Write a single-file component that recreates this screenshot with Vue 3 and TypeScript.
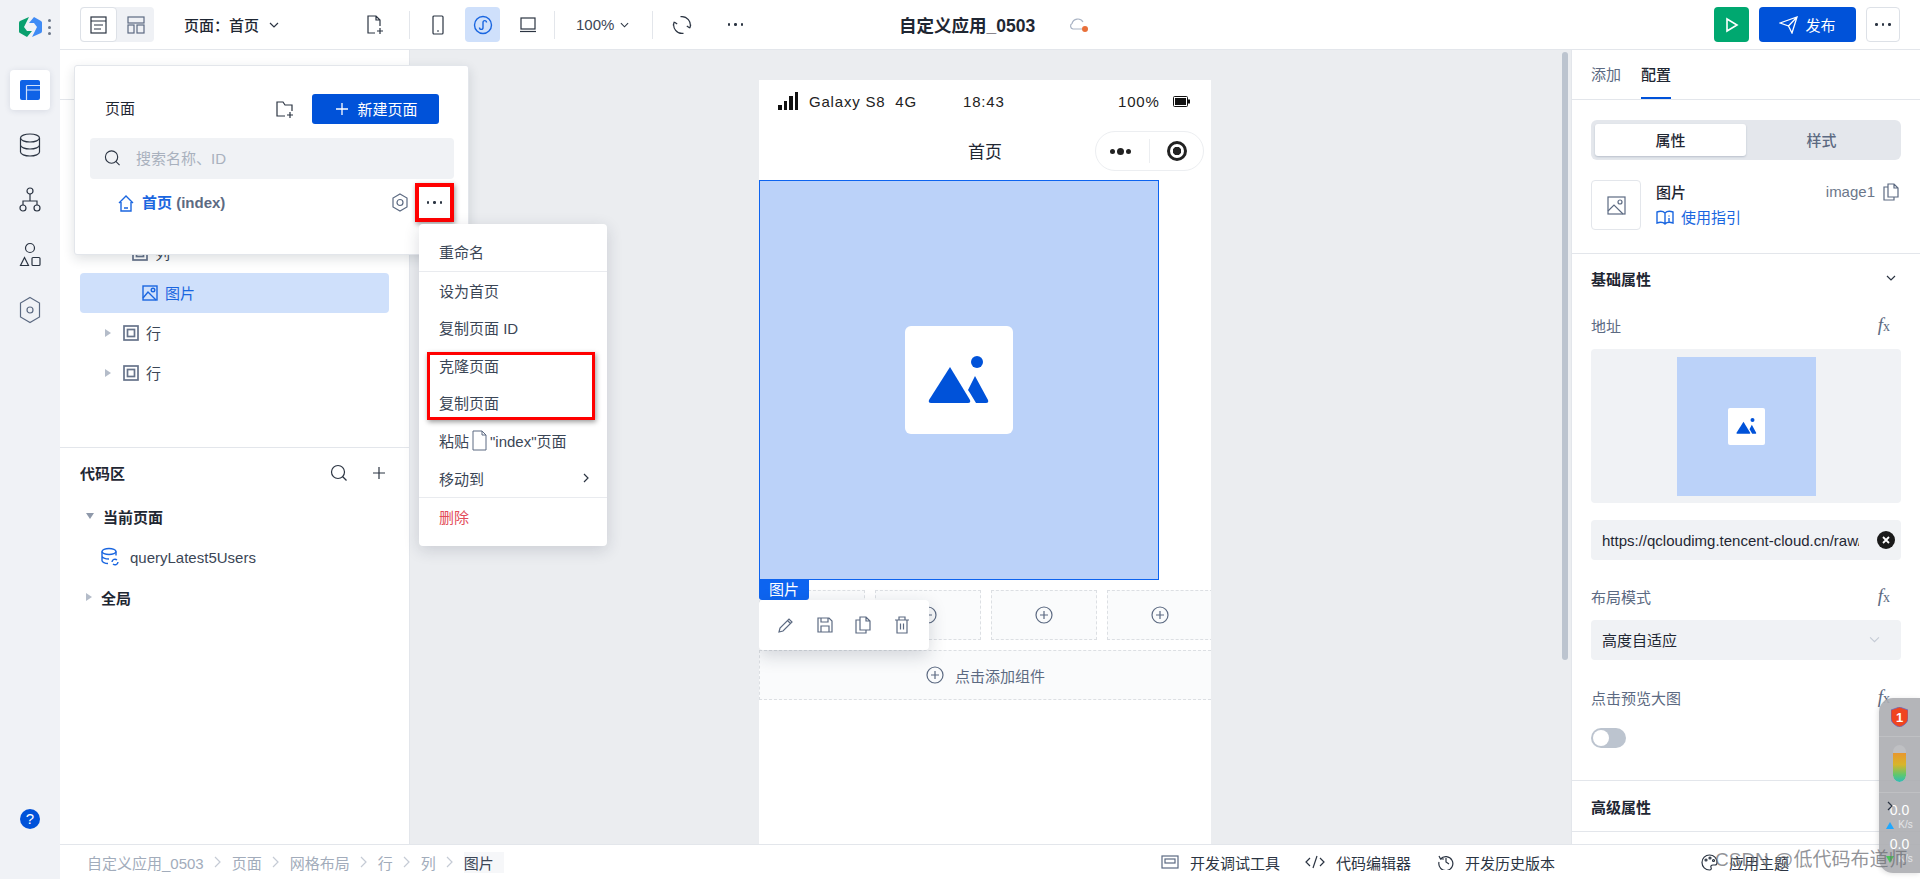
<script setup lang="ts">
const crumbs: string[] = ['自定义应用_0503', '页面', '网格布局', '行', '列']
const cells: number[] = [1, 2, 3, 4]
</script>

<template>
  <div class="app">
    <aside class="rail">
      <div class="logo">
        <svg width="23" height="20" viewBox="0 0 23 20">
          <path d="M10 0L1 4Q0 4.500 0 6V14.500Q0 15.500 1 16L8 20L13 14H8L5 10Z" fill="#0aa06e" />
          <path d="M13 20L22 16Q23 15.500 23 14V5.500Q23 4.500 22 4L15 0L10 6H15L18 10Z" fill="#3f8bf5" />
        </svg>
        <span class="logo-dots"><i></i><i></i><i></i></span>
      </div>
      <div class="rail-item active">
        <svg width="20" height="20" viewBox="0 0 20 20"><path d="M2 0h16a2 2 0 0 1 2 2v16a2 2 0 0 1-2 2H2a2 2 0 0 1-2-2V2a2 2 0 0 1 2-2z" fill="#0f62e6" /><path d="M6.500 5.500V20M6.500 5.500H20M6.500 10H20" stroke="#cfe0fb" stroke-width="1.200" fill="none" /></svg>
      </div>
      <div class="rail-item">
        <svg width="22" height="24" viewBox="0 0 22 24" class="ico dark"><ellipse cx="11" cy="5" rx="9.500" ry="4" /><path d="M1.500 5v14c0 2.200 4.300 4 9.500 4s9.500-1.800 9.500-4V5M1.500 12c0 2.200 4.300 4 9.500 4s9.500-1.800 9.500-4" /></svg>
      </div>
      <div class="rail-item">
        <svg width="22" height="26" viewBox="0 0 22 26" class="ico dark"><circle cx="11" cy="4" r="3" /><circle cx="4" cy="21" r="3" /><circle cx="18" cy="21" r="3" /><path d="M11 7v7M4 18v-4h14v4" /></svg>
      </div>
      <div class="rail-item">
        <svg width="22" height="26" viewBox="0 0 22 26" class="ico dark"><circle cx="11" cy="6" r="4.500" /><path d="M5.500 15.500l4 8h-8z" /><rect x="13" y="15.500" width="8" height="8" rx="1" /></svg>
      </div>
      <div class="rail-item">
        <svg width="22" height="28" viewBox="0 0 22 28" class="ico"><path d="M11 1.500l9.500 5.500v14L11 26.500 1.500 21V7z" /><circle cx="11" cy="14" r="3" /></svg>
      </div>
      <div class="help">?</div>
    </aside>

    <div class="main">
      <header class="topbar">
        <div class="toggle">
          <span class="toggle-on">
            <svg width="17" height="18" viewBox="0 0 17 18" class="ico dark"><rect x="1" y="1" width="15" height="16" /><path d="M1 5h15M4 9h9M4 13h7" /></svg>
          </span>
          <span class="toggle-off">
            <svg width="18" height="18" viewBox="0 0 18 18" class="ico"><rect x="1" y="1" width="16" height="6" /><rect x="1" y="9" width="6" height="8" /><rect x="10" y="9" width="7" height="8" /></svg>
          </span>
        </div>
        <div class="pagesel">
          <span>页面：首页</span>
          <svg width="10" height="6" viewBox="0 0 10 6" class="ico dark"><path d="M1 1l4 4 4-4" /></svg>
        </div>
        <span class="tool">
          <svg width="18" height="20" viewBox="0 0 18 20" class="ico dark"><path d="M9 18H2V1h8l4 4v6M10 1v4h4M11 16h6M14 13v6" /></svg>
        </span>
        <i class="sep s1"></i>
        <span class="tool t1">
          <svg width="12" height="20" viewBox="0 0 12 20" class="ico dark"><rect x="1" y="1" width="10" height="18" rx="1" /><path d="M5 16h2" /></svg>
        </span>
        <span class="tool t2 on">
          <svg width="20" height="20" viewBox="0 0 20 20" class="ico blue"><circle cx="10" cy="10" r="8.500" /><path d="M6.500 12.500c0 2.500 3.500 2.500 3.500 0V7.500c0-2.500 3.500-2.500 3.500 0" /></svg>
        </span>
        <span class="tool t2">
          <svg width="18" height="16" viewBox="0 0 18 16" class="ico dark"><rect x="2" y="1" width="14" height="11" /><path d="M1 14.500h16" /></svg>
        </span>
        <i class="sep s2"></i>
        <div class="zoomsel">
          <span>100%</span>
          <svg width="9" height="6" viewBox="0 0 10 6" class="ico dark"><path d="M1 1l4 4 4-4" /></svg>
        </div>
        <i class="sep s3"></i>
        <span class="tool t3">
          <svg width="20" height="20" viewBox="0 0 20 20" class="ico dark"><path d="M8.500 1.700A8.500 8.500 0 0 1 17.800 13M17.800 13l-3-2M17.800 13l1-3.500M11.500 18.300A8.500 8.500 0 0 1 2.200 7M2.200 7l3 2M2.200 7l-1 3.500" /></svg>
        </span>
        <span class="tool t4 dots3"><i></i><i></i><i></i></span>
        <div class="apptitle">自定义应用_0503</div>
        <span class="cloud">
          <svg width="22" height="18" viewBox="0 0 22 18"><path d="M13 13H4a3 3 0 0 1-1-5.500A6 6 0 0 1 14 6" fill="none" stroke="#a9b3c4" stroke-width="1.200" /><circle cx="16" cy="13" r="3" fill="#e8703a" /></svg>
        </span>
        <div class="actions">
          <button class="run"><svg width="14" height="16" viewBox="0 0 14 16"><path d="M2 2l10 6-10 6z" fill="none" stroke="#fff" stroke-width="1.600" /></svg></button>
          <button class="publish">
            <svg width="19" height="18" viewBox="0 0 19 18"><path d="M1 7L18 1l-5 16-3.500-7zM9.500 10L18 1" fill="none" stroke="#fff" stroke-width="1.300" /></svg>
            <span>发布</span>
          </button>
          <button class="more dots3"><i></i><i></i><i></i></button>
        </div>
      </header>

      <div class="mid">
        <section class="left">
          <div class="left-head"></div>
          <div class="tree">
            <div class="tree-row" style="padding-left: 60px">
              <svg width="16" height="16" viewBox="0 0 16 16" class="ico box"><rect x="1" y="1" width="14" height="14" /><rect x="4.500" y="4.500" width="7" height="7" /></svg>
              <span>网格布局</span>
            </div>
            <div class="tree-row" style="padding-left: 60px">
              <svg width="16" height="16" viewBox="0 0 16 16" class="ico box"><rect x="1" y="1" width="14" height="14" /><rect x="4.500" y="4.500" width="7" height="7" /></svg>
              <span>行</span>
            </div>
            <div class="tree-row" style="padding-left: 52px">
              <svg width="16" height="16" viewBox="0 0 16 16" class="ico box"><rect x="1" y="1" width="14" height="14" /><rect x="4.500" y="4.500" width="7" height="7" /></svg>
              <span>列</span>
            </div>
            <div class="tree-row sel">
              <svg width="16" height="16" viewBox="0 0 16 16" class="ico blue"><rect x="1" y="1" width="14" height="14" /><path d="M1 13l5-6 8 8" /><circle cx="11" cy="5" r="1.800" /></svg>
              <span>图片</span>
            </div>
            <div class="tree-row branch">
              <i class="tri tri-r"></i>
              <svg width="16" height="16" viewBox="0 0 16 16" class="ico box"><rect x="1" y="1" width="14" height="14" /><rect x="4.500" y="4.500" width="7" height="7" /></svg>
              <span>行</span>
            </div>
            <div class="tree-row branch">
              <i class="tri tri-r"></i>
              <svg width="16" height="16" viewBox="0 0 16 16" class="ico box"><rect x="1" y="1" width="14" height="14" /><rect x="4.500" y="4.500" width="7" height="7" /></svg>
              <span>行</span>
            </div>
          </div>
          <div class="code">
            <div class="code-head">
              <b>代码区</b>
              <svg width="18" height="18" viewBox="0 0 18 18" class="ico dark"><circle cx="8" cy="8" r="6.500" /><path d="M12.500 12.500l4 4" /></svg>
              <svg class="plus ico dark" width="14" height="14" viewBox="0 0 14 14"><path d="M7 1v12M1 7h12" /></svg>
            </div>
            <div class="code-row"><i class="tri tri-d"></i><b>当前页面</b></div>
            <div class="code-row query">
              <svg width="20" height="20" viewBox="0 0 20 20" class="ico blue"><ellipse cx="9" cy="4.500" rx="7" ry="3" /><path d="M2 4.500v9c0 1.500 3 3 6 3M16 4.500v4M2 9c0 1.500 3 3 7 3" /><path d="M12 15a3 3 0 0 1 5-2M18 15a3 3 0 0 1-5 2" /></svg>
              <span>queryLatest5Users</span>
            </div>
            <div class="code-row"><i class="tri tri-r"></i><b>全局</b></div>
          </div>
        </section>

        <section class="canvas">
          <div class="phone">
            <div class="status">
              <span class="signal"><i></i><i></i><i></i><i></i></span>
              <span class="carrier">Galaxy S8&nbsp;&nbsp;4G</span>
              <span class="clock">18:43</span>
              <span class="pct">100%</span>
              <svg width="17" height="11" viewBox="0 0 17 11"><rect x=".500" y=".500" width="14" height="10" rx="1" fill="#fff" stroke="#111" /><rect x="2" y="2" width="11" height="7" fill="#111" /><rect x="15" y="3.500" width="2" height="4" fill="#111" /></svg>
            </div>
            <div class="nav">
              <span></span>
              <span class="nav-title">首页</span>
              <div class="capsule">
                <span class="cap-dots"><i></i><i class="big"></i><i></i></span>
                <i class="cap-sep"></i>
                <span class="cap-dot"></span>
              </div>
            </div>
            <div class="image">
              <div class="img-ph">
                <svg width="62" height="48" viewBox="0 0 62 48"><path d="M22 4l20 33q1 3-2 3H3q-3 0-2-3z" fill="#0052d9" transform="translate(0 7)" /><path d="M47 20l13 24q1 3-2 3H48l-6-10-2-3z" fill="#0052d9" /><circle cx="49" cy="6" r="6" fill="#0052d9" /></svg>
              </div>
            </div>
            <div class="cells">
              <div v-for="c in cells" :key="c" class="cell">
                <svg width="18" height="18" viewBox="0 0 18 18" class="ico"><circle cx="9" cy="9" r="8" /><path d="M9 5v8M5 9h8" /></svg>
              </div>
            </div>
            <div class="addrow">
              <svg width="18" height="18" viewBox="0 0 18 18" class="ico"><circle cx="9" cy="9" r="8" /><path d="M9 5v8M5 9h8" /></svg>
              <span>点击添加组件</span>
            </div>
            <div class="img-label">图片</div>
            <div class="img-tools">
              <svg width="16" height="16" viewBox="0 0 16 16" class="ico"><path d="M1 15l1-4 9-9 3 3-9 9zM9.500 3.500l3 3" /></svg>
              <svg width="16" height="16" viewBox="0 0 16 16" class="ico"><path d="M1 1h11l3 3v11H1zM4 1v4h7V1M4 15V9h8v6" /></svg>
              <svg width="16" height="18" viewBox="0 0 16 18" class="ico"><path d="M5 14V1h6l4 4v9zM11 1v4h4M5 4H1v13h10v-3" /></svg>
              <svg width="16" height="18" viewBox="0 0 16 18" class="ico"><path d="M1 4h14M5 4V1h6v3M3 4v13h10V4M6.500 7.500v6M9.500 7.500v6" /></svg>
            </div>
          </div>
          <div class="vscroll"></div>
        </section>

        <section class="right">
          <div class="tabs">
            <span>添加</span>
            <span class="tab-on">配置</span>
          </div>
          <div class="head-sec">
            <div class="seg">
              <span class="seg-on">属性</span>
              <span>样式</span>
            </div>
            <div class="card">
              <div class="card-ico">
                <svg width="19" height="19" viewBox="0 0 19 19" class="ico"><rect x="1" y="1" width="17" height="17" /><path d="M1 15l6-6 9 9" /><circle cx="13" cy="6" r="2" /></svg>
              </div>
              <div class="card-txt">
                <b>图片</b>
                <span class="guide">
                  <svg width="18" height="17" viewBox="0 0 18 17" class="ico blue"><path d="M9 3C7 1 4 1 1 2v11c3-1 6-1 8 1 2-2 5-2 8-1V2c-3-1-6-1-8 1zM9 3v11M13 5.500v1M13 8v3.500" /></svg>
                  使用指引
                </span>
              </div>
              <div class="card-id">
                <span>image1</span>
                <svg width="16" height="18" viewBox="0 0 16 18" class="ico"><path d="M5 14V1h6l4 4v9zM11 1v4h4M5 4H1v13h10v-3" /></svg>
              </div>
            </div>
          </div>
          <div class="props">
            <div class="sec-head">
              <b>基础属性</b>
              <svg width="10" height="6" viewBox="0 0 10 6" class="ico dark"><path d="M1 1l4 4 4-4" /></svg>
            </div>
            <div class="field f-addr"><span>地址</span><em>f<small>x</small></em></div>
            <div class="preview">
              <div class="preview-img">
                <div class="preview-ph">
                  <svg width="21" height="16" viewBox="0 0 62 48"><path d="M22 4l20 33q1 3-2 3H3q-3 0-2-3z" fill="#0052d9" transform="translate(0 7)" /><path d="M47 20l13 24q1 3-2 3H48l-6-10-2-3z" fill="#0052d9" /><circle cx="49" cy="6" r="6" fill="#0052d9" /></svg>
                </div>
              </div>
            </div>
            <div class="input">
              <span class="url">https://qcloudimg.tencent-cloud.cn/raw/abc</span>
              <svg width="18" height="18" viewBox="0 0 18 18"><circle cx="9" cy="9" r="9" fill="#1a1a1a" /><path d="M6 6l6 6M12 6l-6 6" stroke="#fff" stroke-width="1.800" /></svg>
            </div>
            <div class="field f-mode"><span>布局模式</span><em>f<small>x</small></em></div>
            <div class="input select">
              <span>高度自适应</span>
              <svg width="11" height="7" viewBox="0 0 10 6" fill="none" stroke="#c5cbd5" stroke-width="1"><path d="M1 1l4 4 4-4" /></svg>
            </div>
            <div class="field f-prev"><span>点击预览大图</span><em>f<small>x</small></em></div>
            <div class="switch"><i></i></div>
          </div>
          <div class="sec-head adv">
            <b>高级属性</b>
            <svg width="6" height="10" viewBox="0 0 6 10" class="ico dark"><path d="M1 1l4 4-4 4" /></svg>
          </div>
        </section>
      </div>

      <footer class="bottom">
        <nav class="crumbs">
          <template v-for="c in crumbs" :key="c">
            <span>{{ c }}</span>
            <svg width="7" height="12" viewBox="0 0 7 12" fill="none" stroke="#c5cbd5" stroke-width="1.200"><path d="M1 1l5 5-5 5" /></svg>
          </template>
          <span class="crumb-on">图片</span>
        </nav>
        <div class="foot-tools">
          <span class="ft ft1">
            <svg width="18" height="14" viewBox="0 0 18 14" class="ico"><rect x="1" y="1" width="16" height="12" /><rect x="4" y="4" width="10" height="4" /></svg>
            开发调试工具
          </span>
          <span class="ft ft2">
            <svg width="20" height="14" viewBox="0 0 20 14" class="ico dark"><path d="M5 3L1 7l4 4M15 3l4 4-4 4M12 1L8 13" /></svg>
            代码编辑器
          </span>
          <span class="ft ft3">
            <svg width="16" height="16" viewBox="0 0 16 16" class="ico dark"><path d="M1 2l1.500 3A7 7 0 1 1 1 8M2.500 5H6M8 4v4l3 2" /></svg>
            开发历史版本
          </span>
          <span class="ft ft4">
            <svg width="17" height="17" viewBox="0 0 17 17" class="ico dark"><path d="M8.500 1a7.500 7.500 0 0 0 0 15c2 0 2-1.500 1.500-2.500s0-2.500 2-2.500h2c1.500 0 2-1 2-2.500C16 4 13 1 8.500 1z" /><circle cx="5" cy="6" r="1" /><circle cx="9" cy="4" r="1" /><circle cx="12.500" cy="6.500" r="1" /></svg>
            应用主题
          </span>
        </div>
      </footer>
    </div>

    <!-- page popover and its context menu -->
    <div class="popup">
      <div class="pop-head">
        <span>页面</span>
        <svg width="18" height="17" viewBox="0 0 18 17" class="ico dark"><path d="M9 15H1V1h6l2 3h7v6M11 14h6M14 11v6" /></svg>
        <button class="newpage"><svg width="12" height="12" viewBox="0 0 12 12" fill="none" stroke="#fff" stroke-width="1.300"><path d="M6 0v12M0 6h12" /></svg>新建页面</button>
      </div>
      <div class="search">
        <svg width="17" height="18" viewBox="0 0 18 18" class="ico dark"><circle cx="8" cy="8" r="6.500" /><path d="M12.500 12.500l4 4" /></svg>
        <span>搜索名称、ID</span>
      </div>
      <div class="pop-row">
        <svg width="16" height="18" viewBox="0 0 16 18" class="ico blue"><path d="M1 9l7-7 7 7M3 8v9h10V8M6 14h4" /></svg>
        <b><span class="pr-blue">首页</span> (index)</b>
        <svg class="pr-hex ico" width="16" height="19" viewBox="0 0 16 19"><path d="M8 1l7 4v9l-7 4-7-4V5z" /><circle cx="8" cy="9.500" r="3" /></svg>
        <div class="pr-more dots3"><i></i><i></i><i></i></div>
      </div>
    </div>

    <div class="menu">
      <div class="mi first">重命名</div>
      <div class="mi">设为首页</div>
      <div class="mi">复制页面 ID</div>
      <div class="mi">克隆页面</div>
      <div class="mi">复制页面</div>
      <div class="mi paste">粘贴<svg width="15" height="21" viewBox="0 0 15 21" fill="none" stroke="#5c6a82" stroke-width="1"><path d="M1 1h9l4 4v15H1zM10 1v4h4" /></svg>"index"页面</div>
      <div class="mi move">移动到<svg width="6" height="10" viewBox="0 0 6 10" class="ico dark"><path d="M1 1l4 4-4 4" /></svg></div>
      <div class="mi danger">删除</div>
      <div class="redbox"></div>
    </div>

    <div class="widget">
      <div class="w-shield">
        <svg width="17" height="20" viewBox="0 0 17 20"><path d="M8.500 0L17 3v8c0 5-5 8-8.500 9C5 19 0 16 0 11V3z" fill="#f0451f" stroke="#6a6ac0" stroke-width=".8" /><text x="8.500" y="14.500" text-anchor="middle" fill="#fff" font-size="13" font-weight="700" font-family="Liberation Sans">1</text></svg>
      </div>
      <div class="w-gauge"><i></i></div>
      <div class="w-net">
        <span class="w-val">0.0</span>
        <span class="w-unit"><i class="up"></i>K/s</span>
        <span class="w-val">0.0</span>
        <span class="w-unit"><i class="dn"></i>K/s</span>
      </div>
    </div>

    <div class="watermark">CSDN @低代码布道师</div>
  </div>
</template>

<style scoped>
.app {
  position: relative;
  display: flex;
  width: 1920px;
  height: 879px;
  overflow: hidden;
  background: #fff;
  color: #1f2733;
  font: 15px "Liberation Sans", "Noto Sans CJK SC", sans-serif;
}
i { display: block; font-style: normal; }
button { border: 0; padding: 0; font: inherit; cursor: pointer; }
.ico { fill: none; stroke: #5c6a82; stroke-width: 1.200; flex: none; }
.ico.dark { stroke: #2b3442; }
.ico.blue { stroke: #1a66e0; stroke-width: 1.400; }
.ico.box { stroke-width: 1.700; stroke: #66738a; }

/* rail */
.rail {
  width: 60px;
  flex: none;
  display: flex;
  flex-direction: column;
  align-items: center;
  gap: 15px;
  background: #f0f2f6;
}
.logo { height: 70px; width: 60px; display: flex; align-items: center; gap: 6px; padding: 0 0 16px 19px; box-sizing: border-box; margin-bottom: -15px; }
.logo-dots i { width: 3px; height: 3px; border-radius: 50%; background: #6b7789; margin: 3.500px 0; }
.rail-item { width: 40px; height: 40px; display: flex; align-items: center; justify-content: center; border-radius: 4px; }
.rail-item.active { background: #fff; box-shadow: 0 1px 6px rgba(30, 50, 90, .12); }
.help { margin-top: auto; margin-bottom: 50px; width: 20px; height: 20px; border-radius: 50%; background: #0052d9; color: #fff; font-size: 15px; line-height: 20px; text-align: center; }

.main { flex: 1; min-width: 0; display: flex; flex-direction: column; }

/* top bar */
.topbar { height: 49px; flex: none; display: flex; align-items: center; border-bottom: 1px solid #e3e6eb; box-sizing: content-box; }
.toggle { margin-left: 20px; display: flex; height: 35px; width: 74px; background: #eff1f5; border-radius: 4px; }
.toggle span { display: flex; align-items: center; justify-content: center; }
.toggle-on { width: 37px; background: #fff; border: 1px solid #dde1e7; border-radius: 4px; box-sizing: border-box; }
.toggle-off { flex: 1; }
.pagesel { width: 173px; margin-left: 30px; box-sizing: border-box; display: flex; align-items: center; gap: 10px; font-size: 15px; font-weight: 500; }
.tool { width: 35px; height: 35px; flex: none; display: flex; align-items: center; justify-content: center; border-radius: 4px; }
.tool.on { background: #cfe0fb; }
.t2 { margin-left: 10px; }
.sep { width: 1px; height: 28px; background: #e3e6eb; flex: none; }
.s1 { margin: 0 10px 0 17px; }
.s2 { margin: 0 21px 0 9px; }
.s3 { margin-left: 21px; }
.zoomsel { display: flex; align-items: center; gap: 6px; font-size: 15px; color: #3b4656; width: 55px; }
.t3 { margin-left: 11px; }
.t4 { margin-left: 19px; }
.dots3 { display: flex; align-items: center; justify-content: center; gap: 4px; }
.dots3 i { width: 2.500px; height: 2.500px; border-radius: 50%; background: #2b3442; }
.apptitle { margin-left: 146px; font-size: 17.500px; font-weight: 700; white-space: nowrap; }
.cloud { margin-left: 34px; display: flex; }
.actions { margin-left: auto; padding-right: 20px; display: flex; gap: 10px; }
.run { width: 35px; height: 35px; background: #00a870; border-radius: 4px; display: flex; align-items: center; justify-content: center; }
.publish { width: 97px; height: 35px; background: #0052d9; color: #fff; border-radius: 4px; display: flex; align-items: center; justify-content: center; gap: 7px; font-size: 15px; }
.more { width: 34px; height: 35px; background: #fff; border: 1px solid #dde1e7; border-radius: 4px; box-sizing: border-box; }

/* middle */
.mid { height: 794px; flex: none; display: flex; }
.left { width: 350px; flex: none; border-right: 1px solid #e3e6eb; box-sizing: border-box; display: flex; flex-direction: column; }
.left-head { height: 49px; border-bottom: 1px solid #e3e6eb; flex: none; }
.tree { height: 348px; box-sizing: border-box; padding: 53px 20px 0; border-bottom: 1px solid #e3e6eb; flex: none; }
.tree-row { height: 40px; display: flex; align-items: center; gap: 7px; color: #3b4656; padding-bottom: 1px; box-sizing: border-box; }
.tree-row.sel { background: #cfe0fb; border-radius: 4px; padding-left: 62px; color: #1a66e0; }
.tree-row.branch { padding-left: 25px; gap: 0; }
.tree-row.branch svg { margin: 0 7px 0 12px; }
.tri { width: 0; height: 0; flex: none; border-style: solid; border-color: transparent; }
.tri-r { border-width: 4.500px 0 4.500px 6px; border-left-color: #b4bcc9; }
.tri-d { border-width: 6px 4.500px 0; border-top-color: #8f99aa; }
.code { padding: 0 20px; }
.code-head { height: 48px; display: flex; align-items: center; padding-top: 1px; box-sizing: border-box; }
.code-head b { font-size: 15px; margin-right: auto; }
.code-head .plus { margin: 0 3px 0 24px; }
.code-row { height: 40px; display: flex; align-items: center; gap: 9px; padding-left: 6px; }
.code-row b { font-size: 15px; }
.code-row.query { padding-left: 20px; gap: 10px; color: #3b4656; margin-top: 1px; }

/* canvas */
.canvas { flex: 1; min-width: 0; display: flex; background: #ebedf0; }
.phone { position: relative; width: 452px; margin: 30px 0 0 349px; background: #fff; overflow: hidden; display: flex; flex-direction: column; }
.status { height: 42px; flex: none; display: flex; align-items: center; padding-left: 19px; font-size: 15px; letter-spacing: .8px; color: #222; }
.signal { display: flex; align-items: flex-end; gap: 2px; height: 18px; }
.signal i { width: 3.500px; background: #111; }
.signal i:nth-child(1) { height: 5px; }
.signal i:nth-child(2) { height: 9px; }
.signal i:nth-child(3) { height: 14px; }
.signal i:nth-child(4) { height: 18px; }
.carrier { margin-left: 11px; width: 154px; white-space: nowrap; }
.clock { width: 155px; }
.pct { width: 55px; }
.nav { height: 58px; flex: none; display: grid; grid-template-columns: 1fr auto 1fr; align-items: center; }
.nav-title { font-size: 17px; padding-bottom: 2px; }
.capsule { justify-self: end; margin-right: 7px; width: 109px; height: 40px; box-sizing: border-box; border: 1px solid #eceef1; border-radius: 20px; display: flex; align-items: center; }
.cap-dots { display: flex; align-items: center; gap: 2px; margin-left: 14px; width: 39px; }
.cap-dots i { width: 5px; height: 5px; border-radius: 50%; background: #222; }
.cap-dots i.big { width: 7px; height: 7px; }
.cap-sep { width: 1px; height: 24px; background: #eceef1; }
.cap-dot { margin-left: 17px; width: 20px; height: 20px; box-sizing: border-box; border-radius: 50%; border: 3px solid #222; background: radial-gradient(circle, #222 0 4px, #fff 4.500px); }
.image { width: 400px; height: 400px; flex: none; box-sizing: border-box; border: 1px solid #0d64f0; background: #bbd2f9; display: flex; align-items: center; justify-content: center; }
.img-ph { width: 108px; height: 108px; background: #fff; border-radius: 6px; display: flex; align-items: center; justify-content: center; }
.cells { flex: none; display: flex; gap: 10px; margin-top: 10px; height: 50px; }
.cell { width: 106px; flex: none; box-sizing: border-box; border: 1px dashed #dcdfe3; background: #fafbfc; display: flex; align-items: center; justify-content: center; }
.addrow { flex: none; margin-top: 10px; height: 50px; box-sizing: border-box; border: 1px dashed #dcdfe3; border-right: 0; background: #fafbfc; display: flex; align-items: center; justify-content: center; gap: 11px; color: #5c6a82; font-size: 15px; }
.img-label { position: absolute; left: 0; top: 500px; width: 50px; height: 20px; background: #0d64f0; color: #fff; font-size: 15px; line-height: 20px; text-align: center; border-radius: 0 0 3px 3px; }
.img-tools { position: absolute; left: 0; top: 520px; width: 170px; height: 50px; background: #fff; border-radius: 4px; box-shadow: 0 6px 18px rgba(30, 40, 60, .18); display: flex; align-items: center; justify-content: space-around; padding: 0 8px; box-sizing: border-box; }
.vscroll { margin: 2px 3px 0 auto; width: 6px; height: 608px; background: #bcc4cf; border-radius: 3px; }

/* right */
.right { width: 349px; flex: none; box-sizing: border-box; border-left: 1px solid #e3e6eb; display: flex; flex-direction: column; }
.tabs { height: 49px; flex: none; border-bottom: 1px solid #e3e6eb; padding-left: 19px; display: flex; gap: 20px; color: #5c6a82; }
.tabs span { height: 49px; line-height: 49px; box-sizing: border-box; }
.tab-on { color: #1f2733; font-weight: 500; border-bottom: 2px solid #0052d9; }
.head-sec { padding: 20px 19px 23px; border-bottom: 1px solid #e3e6eb; flex: none; }
.seg { height: 40px; box-sizing: border-box; padding: 4px; background: #e4e7ec; border-radius: 6px; display: flex; color: #5c6a82; font-weight: 500; }
.seg span { flex: 1; display: flex; align-items: center; justify-content: center; border-radius: 3px; padding-bottom: 2px; }
.seg .seg-on { background: #fff; color: #1f2733; box-shadow: 0 1px 2px rgba(60, 80, 110, .25); }
.card { margin-top: 20px; height: 50px; display: flex; }
.card-ico { width: 50px; height: 50px; box-sizing: border-box; border: 1px solid #e3e6eb; border-radius: 4px; display: flex; align-items: center; justify-content: center; flex: none; }
.card-txt { margin-left: 15px; display: flex; flex-direction: column; gap: 7px; }
.card-txt b { font-weight: 500; line-height: 18px; margin-top: 4px; }
.guide { display: flex; align-items: center; gap: 7px; color: #1a66e0; font-size: 15px; line-height: 18px; }
.card-id { margin-left: auto; display: flex; align-items: flex-start; gap: 8px; color: #6b778a; font-size: 15px; line-height: 24px; padding-right: 2px; }
.card-id svg { margin-top: 3px; }
.props { padding: 0 19px; height: 527px; box-sizing: border-box; flex: none; border-bottom: 1px solid #e3e6eb; display: flex; flex-direction: column; }
.sec-head { height: 50px; flex: none; display: flex; align-items: center; justify-content: space-between; padding: 0 5px 2px 0; box-sizing: border-box; }
.sec-head b { font-weight: 700; font-size: 15px; }
.sec-head.adv { padding: 0 27px 0 19px; border-bottom: 1px solid #e3e6eb; box-sizing: content-box; }
.sec-head.adv svg { position: relative; z-index: 2; }
.field { flex: none; height: 24px; display: flex; align-items: center; justify-content: space-between; color: #5c6a82; padding: 0 11px 2px 0; box-sizing: border-box; }
.field em { font: italic 19px "Liberation Serif", serif; color: #5c6a82; }
.field em small { font-size: 14px; font-style: normal; }
.f-addr { margin-top: 10px; }
.f-mode { margin-top: 25px; }
.f-prev { margin-top: 26px; }
.preview { margin-top: 11px; height: 154px; flex: none; background: #f0f2f5; border-radius: 4px; display: flex; align-items: center; justify-content: center; }
.preview-img { width: 139px; height: 139px; background: #bbd2f9; display: flex; align-items: center; justify-content: center; }
.preview-ph { width: 37px; height: 37px; background: #fff; border-radius: 2px; display: flex; align-items: center; justify-content: center; }
.input { margin-top: 17px; height: 40px; flex: none; background: #f0f2f5; border-radius: 4px; display: flex; align-items: center; justify-content: space-between; padding: 0 6px 0 11px; box-sizing: border-box; }
.url { width: 257px; overflow: hidden; white-space: nowrap; }
.input.select { margin-top: 11px; padding: 0 21px 2px 11px; }
.switch { margin-top: 18px; width: 35px; height: 20px; border-radius: 10px; background: #bcc4cf; padding: 2px; box-sizing: border-box; flex: none; }
.switch i { width: 16px; height: 16px; border-radius: 50%; background: #fff; }

/* bottom */
.bottom { height: 35px; flex: none; box-sizing: border-box; border-top: 1px solid #e3e6eb; display: flex; align-items: center; }
.crumbs { display: flex; align-items: center; gap: 10.500px; padding-left: 27px; color: #a2acbb; }
.crumb-on { color: #3b4656; background: #f6f7f9; padding-right: 10px; }
.foot-tools { margin-left: auto; display: flex; align-items: center; height: 100%; }
.ft { display: flex; align-items: center; gap: 11px; color: #2b3442; white-space: nowrap; }
.ft2 { margin-left: 25px; }
.ft3 { margin-left: 27px; }
.ft4 { margin: 0 131px 0 146px; gap: 11px; }

/* popup */
.popup { position: absolute; left: 74px; top: 65px; width: 395px; height: 190px; box-sizing: border-box; padding: 28px 14px 0 15px; background: #fff; border: 1px solid #e3e6eb; border-radius: 3px; box-shadow: 0 4px 12px rgba(30, 40, 60, .14); }
.pop-head { display: flex; align-items: center; height: 30px; padding: 0 15px; }
.pop-head > span { margin-right: auto; padding-bottom: 3px; }
.newpage { margin-left: 18px; width: 127px; height: 30px; background: #0052d9; color: #fff; border-radius: 3px; display: flex; align-items: center; justify-content: center; gap: 9px; font-size: 15px; padding: 0 0 1px 3px; box-sizing: border-box; }
.search { margin-top: 14px; height: 41px; background: #f0f2f5; border-radius: 4px; display: flex; align-items: center; gap: 15px; padding: 0 0 2px 14px; box-sizing: border-box; color: #a9b1be; font-size: 15px; }
.pop-row { margin-top: 4px; height: 39px; display: flex; align-items: center; padding-left: 28px; color: #5c6a82; }
.pop-row b { margin: 0 0 3px 8px; font-weight: 700; font-size: 15px; }
.pr-blue { color: #1a66e0; }
.pr-hex { margin: 0 0 0 auto; transform: translateX(-1px); }
.pr-more { margin-left: 6px; width: 39px; height: 39px; box-sizing: border-box; border: 4px solid #f00; box-shadow: 1px 2px 5px rgba(0, 0, 0, .4); }

/* menu */
.menu { position: absolute; left: 419px; top: 224px; width: 188px; height: 322px; background: #fff; border-radius: 4px; box-shadow: 0 4px 16px rgba(30, 40, 60, .16); padding-top: 9px; box-sizing: border-box; color: #3b4656; }
.mi { height: 37.500px; display: flex; align-items: center; padding: 0 0 1.500px 20px; box-sizing: border-box; }
.mi.first { height: 39px; padding-bottom: 1px; border-bottom: 1px solid #e9ebef; }
.paste svg { margin: 0 3px; }
.move { justify-content: space-between; padding: 0 18px 0 20px; }
.danger { color: #e34d59; border-top: 1px solid #e9ebef; height: 38px; padding-bottom: 0; }
.redbox { position: absolute; left: 8px; top: 128px; width: 168px; height: 68px; box-sizing: border-box; border: 3px solid #f00; box-shadow: 1px 2px 5px rgba(0, 0, 0, .4); }

/* floating widget */
.widget { position: absolute; right: 0; top: 698px; width: 41px; height: 175px; border-radius: 14px 0 0 14px; background: rgba(172, 173, 177, .9); display: flex; flex-direction: column; align-items: center; color: #fff; box-shadow: -1px 1px 5px rgba(0, 0, 0, .12); }
.w-shield { height: 39px; width: 100%; flex: none; display: flex; align-items: center; justify-content: center; border-bottom: 1px solid rgba(255, 255, 255, .15); box-sizing: border-box; }
.w-gauge { margin: 8px 0 0; width: 13px; height: 37px; border-radius: 7px; background: rgba(255, 255, 255, .15); position: relative; overflow: hidden; flex: none; }
.w-gauge i { position: absolute; left: 0; right: 0; bottom: 0; height: 29px; border-radius: 0 0 7px 7px; background: linear-gradient(#e8972e, #d8b52a 40%, #5fc76e 75%, #2fbcb8); }
.w-net { margin-top: 10px; width: 100%; border-top: 1px solid rgba(255, 255, 255, .15); display: flex; flex-direction: column; align-items: center; padding-top: 10px; }
.w-val { font-size: 14px; line-height: 15px; }
.w-unit { font-size: 10px; line-height: 14px; display: flex; align-items: center; gap: 4px; margin-bottom: 5px; color: #e4e5e8; }
.w-unit i { width: 0; height: 0; border-style: solid; border-color: transparent; border-width: 0 4px 7px; }
.w-unit .up { border-bottom-color: #1fa8ff; }
.w-unit .dn { border-bottom-color: #4cc35a; transform: rotate(180deg); }

.watermark { position: absolute; left: 1715px; top: 848px; font-size: 19px; line-height: 24px; color: rgba(110, 112, 118, .75); white-space: nowrap; pointer-events: none; }
</style>
